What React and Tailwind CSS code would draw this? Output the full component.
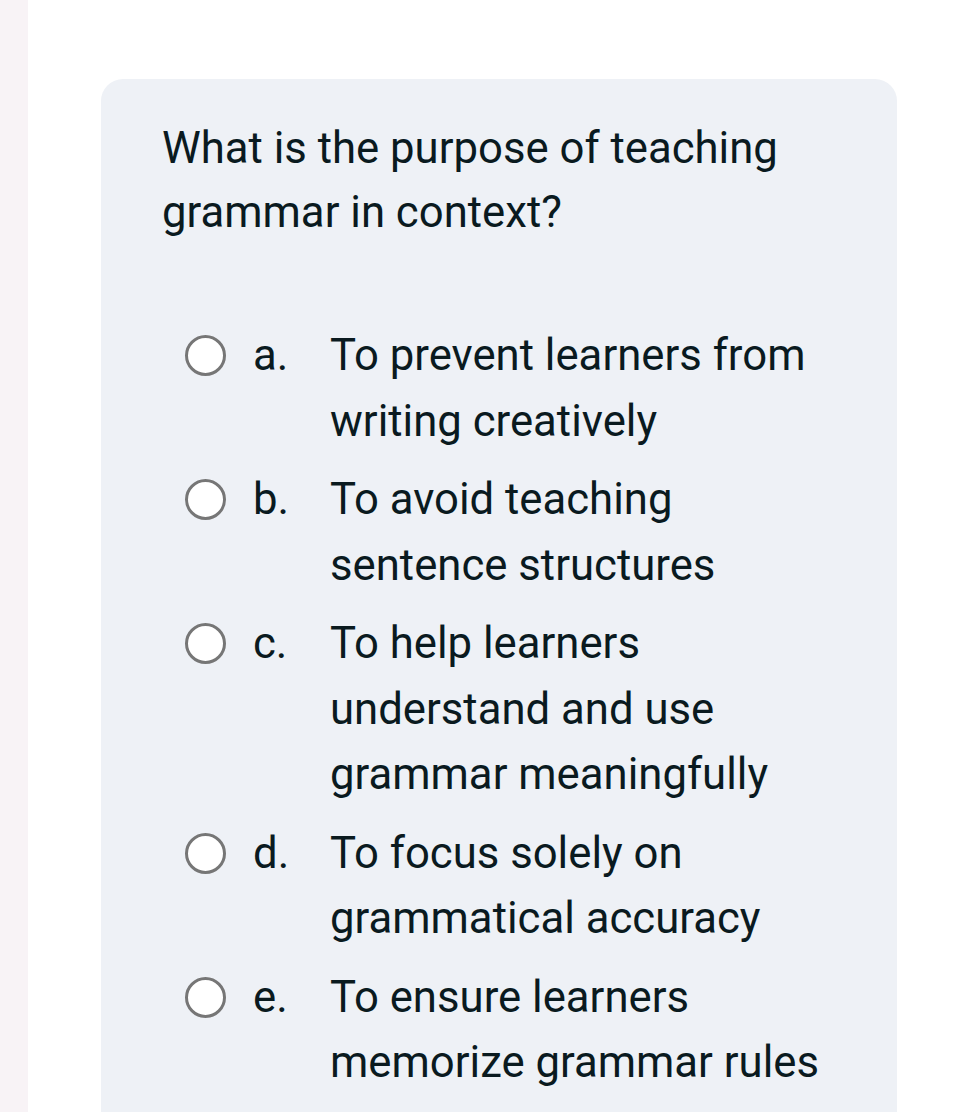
import React from 'react';

const options = [
    { letter: 'a.', text: 'To prevent learners from writing creatively' },
    { letter: 'b.', text: 'To avoid teaching sentence structures' },
    { letter: 'c.', text: 'To help learners understand and use grammar meaningfully' },
    { letter: 'd.', text: 'To focus solely on grammatical accuracy' },
    { letter: 'e.', text: 'To ensure learners memorize grammar rules' },
];

const App = () => {
    return (
        <div className="flex h-[1112px] overflow-hidden bg-white text-[#0a1a1f]" style={{ fontFamily: 'Roboto, "Noto Sans", sans-serif' }}>
            {/* Left strip */}
            <div className="w-[28px] shrink-0 bg-[#f8f3f6]" />

            <div className="flex-1 pl-[73px] pt-[79px]">
                {/* Question card */}
                <div className="w-[796px] min-h-[1100px] rounded-[22px] bg-[#eef1f6] pt-[37px] pl-[61px] pr-[60px]">
                    <h1 className="text-[43.7px] leading-[64px] font-normal">
                        What is the purpose of teaching grammar in context?
                    </h1>

                    <div className="mt-[79px] flex flex-col gap-[13px] pl-[23px]">
                        {options.map((opt) => (
                            <label key={opt.letter} className="flex items-start">
                                <span className="mt-[12px] w-[41px] h-[41px] shrink-0 rounded-full border-[3px] border-[#767676] bg-white" />
                                <span className="ml-[27px] w-[77px] shrink-0 text-[43.7px] leading-[65.5px]">{opt.letter}</span>
                                <span className="w-[510px] text-[43.7px] leading-[65.5px]">{opt.text}</span>
                            </label>
                        ))}
                    </div>
                </div>
            </div>
        </div>
    );
};

export default App;
